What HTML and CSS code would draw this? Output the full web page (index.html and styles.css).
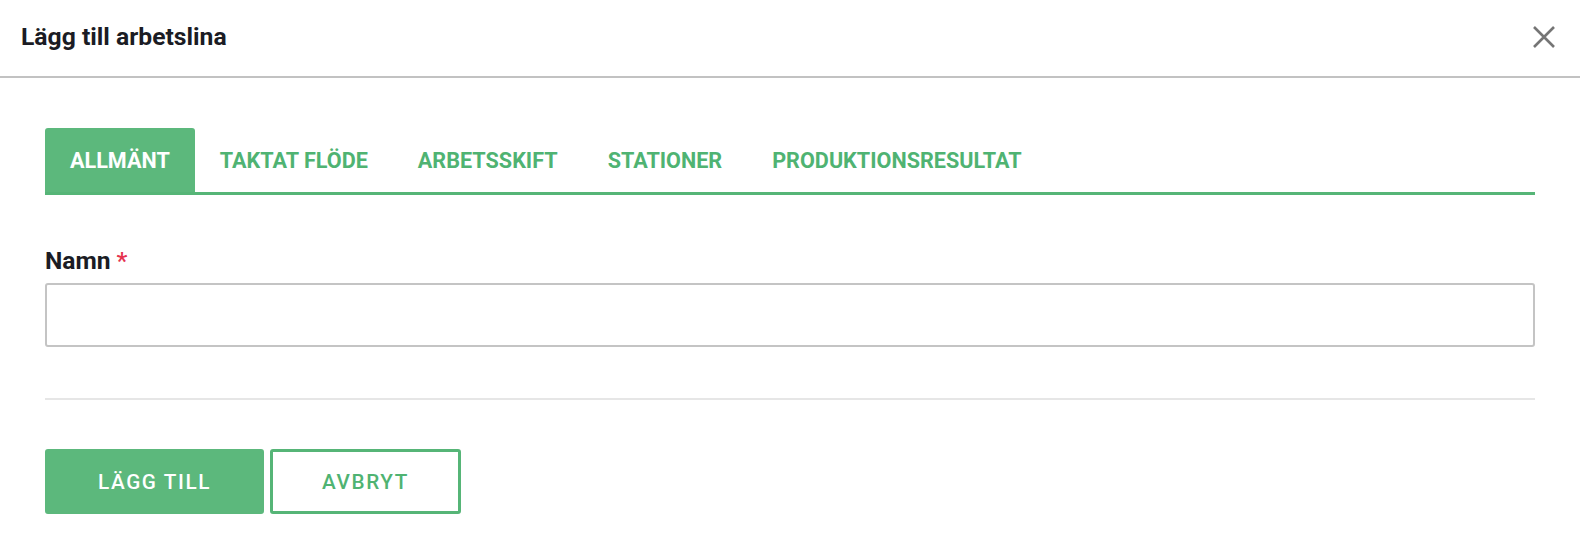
FILE: index.html
```html
<!DOCTYPE html>
<html lang="sv">
<head>
<meta charset="utf-8">
<title>Lägg till arbetslina</title>
<link rel="stylesheet" href="styles.css">
</head>
<body>
<div class="dialog">
  <header class="dialog-header">
    <h1 class="dialog-title">Lägg till arbetslina</h1>
    <button class="close-btn" aria-label="Stäng">
      <svg width="24" height="24" viewBox="0 0 24 24"><path d="M2 2 L22 22 M22 2 L2 22" stroke="#757575" stroke-width="2.6" fill="none"/></svg>
    </button>
  </header>
  <main class="dialog-body">
    <nav class="tabs">
      <div class="tab active">ALLMÄNT</div>
      <div class="tab">TAKTAT FLÖDE</div>
      <div class="tab">ARBETSSKIFT</div>
      <div class="tab">STATIONER</div>
      <div class="tab">PRODUKTIONSRESULTAT</div>
    </nav>
    <div class="field">
      <label class="field-label">Namn<span class="req">*</span></label>
      <input class="field-input" type="text">
    </div>
    <hr class="divider">
    <div class="actions">
      <button class="btn btn-primary">LÄGG TILL</button>
      <button class="btn btn-outline">AVBRYT</button>
    </div>
  </main>
</div>
</body>
</html>
```
FILE: styles.css
```css
* { box-sizing: border-box; }
html, body {
  margin: 0;
  padding: 0;
  background: #ffffff;
  font-family: Roboto, "Liberation Sans", Arial, sans-serif;
  color: #1b1c24;
}
.dialog {
  width: 1580px;
}
.dialog-header {
  height: 78px;
  border-bottom: 2px solid #c2c2c2;
  display: flex;
  align-items: center;
  justify-content: space-between;
  padding: 0 24px 2px 21px;
}
.dialog-title {
  margin: 0;
  font-size: 24.7px;
  line-height: 28px;
  font-weight: 700;
  color: #1b1c24;
}
.close-btn {
  border: 0;
  background: transparent;
  padding: 0;
  width: 24px;
  height: 24px;
  display: flex;
  cursor: pointer;
}
.dialog-body {
  padding: 50px 45px 0 45px;
}
.tabs {
  display: flex;
  border-bottom: 3px solid #56b577;
}
.tab {
  height: 64px;
  padding: 0 25px;
  display: flex;
  align-items: center;
  font-size: 21.6px;
  font-weight: 700;
  color: #4fb372;
  border-radius: 3px 3px 0 0;
}
.tab.active {
  background: #5cb87c;
  color: #ffffff;
}
.field {
  margin-top: 52px;
  display: flex;
  flex-direction: column;
}
.field-label {
  font-size: 24.6px;
  font-weight: 700;
  line-height: 28px;
  color: #1b1c24;
  margin-bottom: 8px;
}
.req {
  color: #e5334f;
  font-weight: 500;
  margin-left: 6px;
}
.field-input {
  height: 64px;
  border: 2px solid #c4c4c4;
  border-radius: 3px;
  font-size: 20px;
  font-family: inherit;
  padding: 0 14px;
  outline: none;
}
.divider {
  margin: 51px 0 0 0;
  border: 0;
  border-top: 2px solid #e6e6e6;
}
.actions {
  margin-top: 49px;
  display: flex;
  gap: 6px;
}
.btn {
  height: 65px;
  border-radius: 3px;
  font-family: inherit;
  font-size: 20.7px;
  font-weight: 500;
  letter-spacing: 1.6px;
  cursor: pointer;
}
.btn-primary {
  width: 219px;
  background: #5cb87c;
  border: 2px solid #5cb87c;
  color: #ffffff;
}
.btn-outline {
  width: 191px;
  background: #ffffff;
  border: 3px solid #56b577;
  color: #4fb372;
}
```
